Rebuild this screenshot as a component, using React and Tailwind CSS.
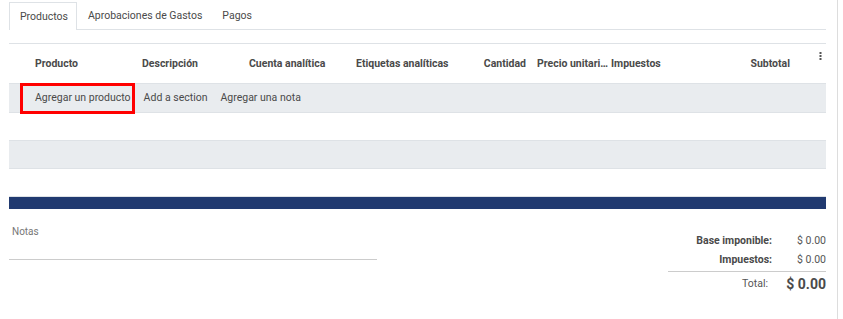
import React from 'react';

const font = { fontFamily: 'Roboto, "Noto Sans", sans-serif' };

function HeaderRow() {
  return (
    <div className="flex h-[41px] items-center border-t border-b border-[#dee2e6] text-[10.5px] font-bold text-[#4a4a4a]">
      <div className="w-[18px]" />
      <div className="w-[107px] pl-2">Producto</div>
      <div className="w-[107px] pl-2">Descripción</div>
      <div className="w-[107px] pl-2">Cuenta analítica</div>
      <div className="w-[122px] pl-2">Etiquetas analíticas</div>
      <div className="w-[60px] pr-1 text-right">Cantidad</div>
      <div className="w-[77px] whitespace-nowrap pl-[7px]" title="Precio unitario">Precio unitari…</div>
      <div className="w-[110px] pl-[4px]">Impuestos</div>
      <div className="w-[73px] text-right">Subtotal</div>
      <div className="flex flex-1 justify-end self-start pr-[4px] pt-[8px]">
        <svg width="3" height="9" viewBox="0 0 3 9" fill="#555">
          <rect x="0.5" y="0" width="2" height="2" />
          <rect x="0.5" y="3" width="2" height="2" />
          <rect x="0.5" y="6" width="2" height="2" />
        </svg>
      </div>
    </div>
  );
}

export default function App() {
  return (
    <div className="flex h-[319px] w-[843px] bg-white text-[#4a4a4a]" style={font}>
      <div className="w-[826px] pl-[9px]">
        {/* tabs */}
        <div className="mt-[2px] flex h-[28px] items-stretch text-[10.5px] text-[#4a4a4a]">
          <div className="flex items-center border border-b-0 border-[#dee2e6] pl-[10px] pr-[8px]">Productos</div>
          <div className="flex flex-1 items-stretch border-b border-[#dee2e6]">
            <div className="flex items-center pl-[11px] pr-[10px]">Aprobaciones de Gastos</div>
            <div className="flex items-center px-[10px]">Pagos</div>
          </div>
        </div>

        <div className="mt-[13px]">
          <HeaderRow />
          <div className="flex h-[29px] items-stretch border-b border-[#dee2e6] bg-[#e9ecef] text-[10.5px] text-[#4a4a4a]">
            <div className="w-[18px]" />
            <span className="relative ml-2 flex items-center">
              Agregar un producto
              <span className="absolute -top-[1px] -bottom-[2px] -left-[15px] -right-[4px] border-[3px] border-[#ff0000]" />
            </span>
            <span className="ml-[13px] flex items-center">Add a section</span>
            <span className="ml-[13px] flex items-center">Agregar una nota</span>
          </div>
          <div className="h-[28px] border-b border-[#dee2e6] bg-white" />
          <div className="h-[28px] border-b border-[#dee2e6] bg-[#e9ecef]" />
          <div className="h-[28px] border-b border-[#dee2e6] bg-white" />
          <div className="h-[12px] bg-[#213a70]" />
        </div>

        <div className="mt-[13px] flex justify-between">
          <div className="w-[368px]">
            <div className="pl-[3px] pt-[2px] text-[10px] text-[#777]">Notas</div>
            <div className="mt-[20px] border-b border-[#ccc]" />
          </div>
          <div className="w-[158px] pt-[9px] text-[10.5px]">
            <div className="flex h-[19px] items-center justify-end">
              <span className="font-bold text-[#4a4a4a]">Base imponible:</span>
              <span className="w-[54px] text-right text-[#555]">$ 0.00</span>
            </div>
            <div className="flex h-[19px] items-center justify-end">
              <span className="font-bold text-[#4a4a4a]">Impuestos:</span>
              <span className="w-[54px] text-right text-[#555]">$ 0.00</span>
            </div>
            <div className="mt-[2px] flex h-[25px] items-center justify-end border-t border-[#ccc]">
              <span className="text-[#555]">Total:</span>
              <span className="w-[58px] text-right text-[14px] font-bold text-[#4a4a4a]">$ 0.00</span>
            </div>
          </div>
        </div>
      </div>
      <div className="ml-[11px] w-[1px] bg-[#ddd]" />
    </div>
  );
}
